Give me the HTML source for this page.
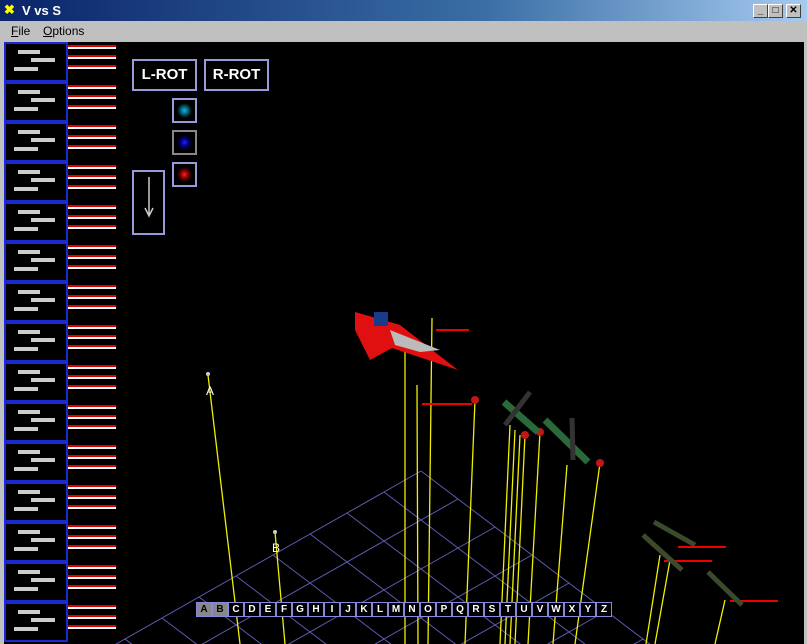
<!DOCTYPE html>
<html><head><style>
html,body{margin:0;width:807px;height:644px;overflow:hidden}
body{background:#c0c0c0;font-family:"Liberation Sans",sans-serif;position:relative}
.tb{position:absolute;left:0;top:0;width:807px;height:21px;background:linear-gradient(90deg,#0a246a,#3a6ea5 60%,#a6caf0);color:#fff;font-weight:bold;font-size:13px}
.menu{position:absolute;top:21px;left:0;width:807px;height:20px;font-size:12px}
.cv{position:absolute;left:4px;top:42px;width:800px;height:602px;background:#000;overflow:hidden}
.btn{position:absolute;width:13px;height:12px;background:#c0c0c0;border:1px solid;border-color:#fff #404040 #404040 #fff;top:4px;font-size:10px;text-align:center;line-height:12px;color:#000}
.ab{position:absolute;border:2px solid #9a9ad8;color:#fff;font:bold 15px "Liberation Sans Narrow","Liberation Sans",sans-serif;text-align:center;box-sizing:border-box}
.lb{position:absolute;top:602px;height:15px;width:16px;box-sizing:border-box;border:1px solid #8888dd;color:#fff;font:bold 10px/13px "Liberation Sans",sans-serif;text-align:center;background:#000}
.bar{position:absolute;left:64px;width:48px;height:4px;background:linear-gradient(#d00 0,#d00 50%,#fff 50%)}
</style></head><body>
<div class="tb"><span style="color:#ff0;position:absolute;left:4px;top:2px">✖</span><span style="position:absolute;left:22px;top:3px">V vs S</span>
<div class="btn" style="left:753px">_</div><div class="btn" style="left:768px">□</div><div class="btn" style="left:786px">✕</div></div>
<div class="menu"><span style="position:absolute;left:11px;top:3px"><u>F</u>ile</span><span style="position:absolute;left:43px;top:3px"><u>O</u>ptions</span></div>
<div class="cv">
<svg width="800" height="602" style="position:absolute;left:0;top:0" viewBox="4 42 800 602">
<g transform="matrix(-37,21,37,28,421,471)" stroke="#5a5ab0">
<path vector-effect="non-scaling-stroke" fill="none" d="M0 0V10M1 0V10M2 0V10M3 0V10M4 0V10M5 0V10M6 0V10M7 0V10M8 0V10M9 0V10M10 0V10M0 0H10M0 1H10M0 2H10M0 3H10M0 4H10M0 5H10M0 6H10M0 7H10M0 8H10M0 9H10M0 10H10"/>
</g>
<g stroke="#f0f000" stroke-width="1.3" fill="none">
<path d="M208 375L240 644M275 532L285 644M405 330L405 644M417 385L418 644M432 318L428 644M475 400L465 644M510 425L500 644M515 430L505 644M520 435L510 644M525 435L515 644M540 432L528 644M567 465L553 644M600 463L575 644M660 555L646 644M670 560L655 644M725 600L715 644"/>
</g>
<g stroke="#e00" stroke-width="2"><path d="M436 330H469M422 404H472M678 547H726M664 561H712M730 601H778"/></g>
<g fill="#c01818"><circle cx="475" cy="400" r="4"/><circle cx="525" cy="435" r="4"/><circle cx="540" cy="432" r="4"/><circle cx="600" cy="463" r="4"/></g>
<polygon points="355,312 400,325 458,370 392,348 370,360 355,330" fill="#e01010"/>
<polygon points="390,330 440,350 420,352 395,345" fill="#bbb"/>
<rect x="374" y="312" width="14" height="14" fill="#1a3a8a"/>
<g stroke="#2a6a3a" stroke-width="7"><path d="M504 402L538 432M545 420L588 462"/></g>
<g stroke="#333" stroke-width="5"><path d="M530 392L505 425M572 418L573 460"/></g>
<g stroke="#3a4a2a" stroke-width="5"><path d="M654 522L695 545M643 535L682 570M708 572L742 605"/></g>
<circle cx="208" cy="374" r="2" fill="#ccc"/><text x="206" y="395" fill="#fff" font-size="12">A</text>
<circle cx="275" cy="532" r="2" fill="#ccc"/><text x="272" y="552" fill="#fff" font-size="12">B</text>
</svg>
</div>
<div class="ab" style="left:132px;top:59px;width:65px;height:32px;line-height:28px">L-ROT</div>
<div class="ab" style="left:204px;top:59px;width:65px;height:32px;line-height:28px">R-ROT</div>
<div class="ab" style="left:172px;top:98px;width:25px;height:25px;background:radial-gradient(circle,#2ae 0,#067 25%,#000 50%)"></div>
<div class="ab" style="left:172px;top:130px;width:25px;height:25px;border-color:#888;background:radial-gradient(circle,#22f 0,#008 25%,#000 50%)"></div>
<div class="ab" style="left:172px;top:162px;width:25px;height:25px;background:radial-gradient(circle,#f22 0,#800 25%,#000 50%)"></div>
<div class="ab" style="left:132px;top:170px;width:33px;height:65px"><svg width="29" height="61"><path d="M15 5V42M11 36L15 44L19 36" stroke="#ccc" stroke-width="1.5" fill="none"/></svg></div>
<div style="position:absolute;left:4px;top:42px;width:115px;height:602px;overflow:hidden">
<script>
var h='';for(var i=0;i<15;i++){var y=i*40;
h+='<div style="position:absolute;left:0;top:'+y+'px;width:60px;height:36px;border:2px solid #1a2ad0;background:#000"><div style="position:absolute;left:12px;top:6px;width:22px;height:4px;background:#ccc"></div><div style="position:absolute;left:25px;top:14px;width:24px;height:4px;background:#ccc"></div><div style="position:absolute;left:8px;top:23px;width:24px;height:4px;background:#ccc"></div></div>';
for(var k=0;k<3;k++)h+='<div class="bar" style="top:'+(y+3+k*10)+'px"></div>';}
document.write(h);
</script></div>
<div style="position:absolute;left:196px;top:0">
<script>
var s='ABCDEFGHIJKLMNOPQRSTUVWXYZ',o='';for(var i=0;i<26;i++)o+='<div class="lb" style="left:'+(i*16)+'px;'+(i<2?'background:#888;color:#000':'')+'">'+s[i]+'</div>';document.write(o);
</script></div>
</body></html>
